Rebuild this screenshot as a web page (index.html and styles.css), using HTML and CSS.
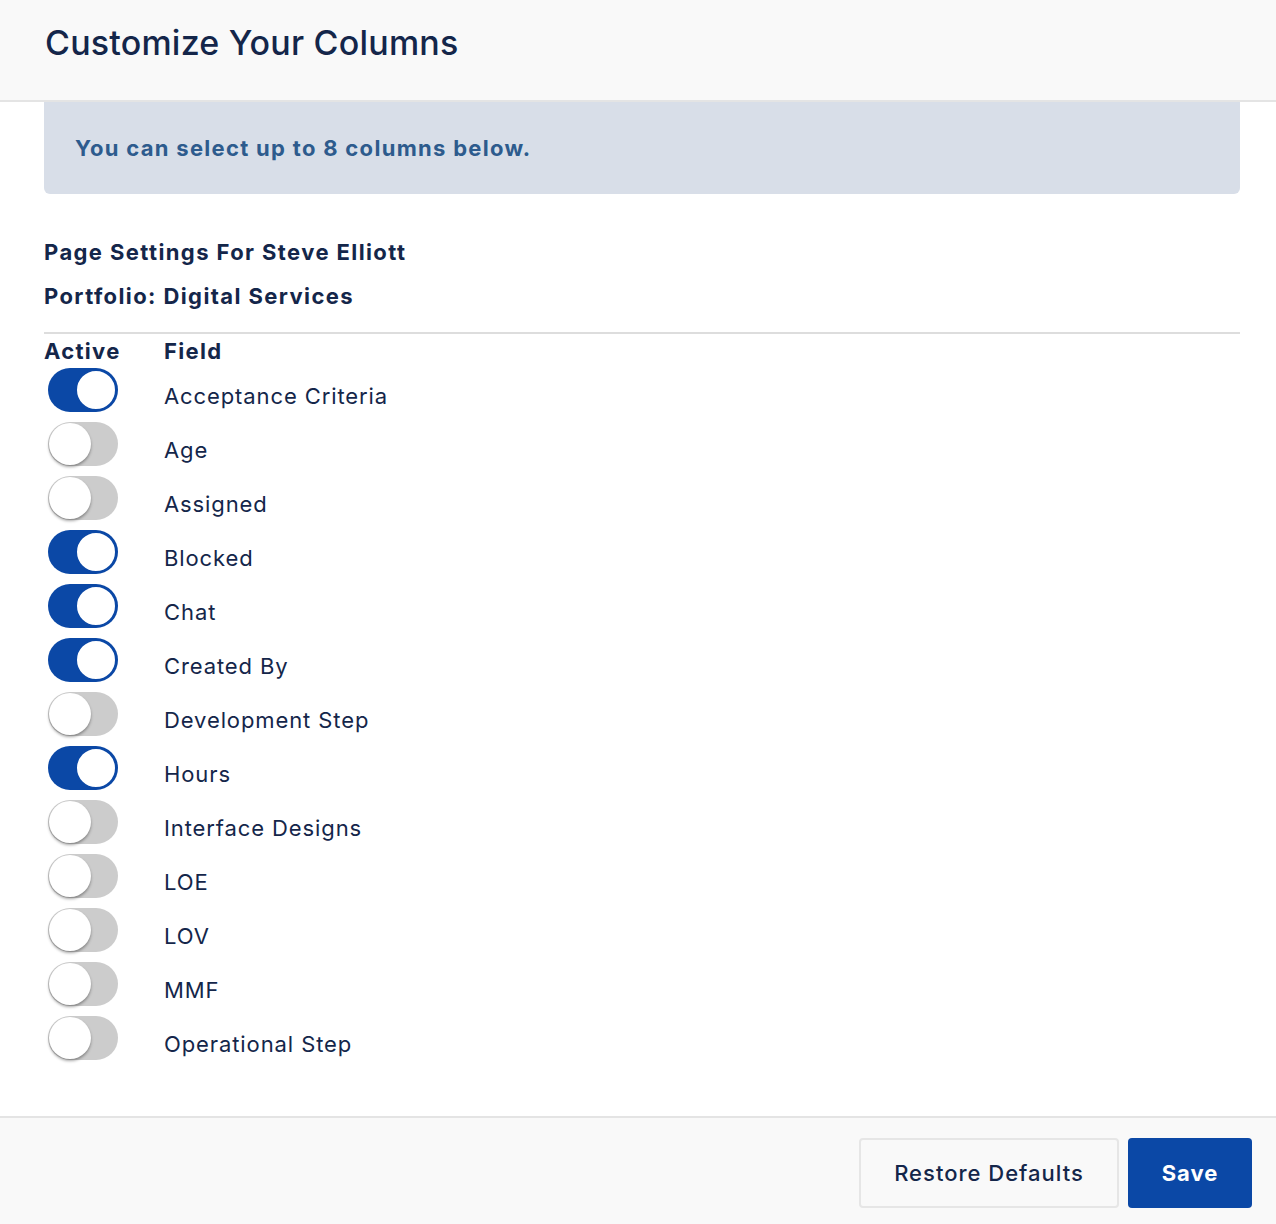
FILE: index.html
```html
<!DOCTYPE html>
<html lang="en">
<head>
    <meta charset="UTF-8">
    <title>Customize Your Columns</title>
    <link rel="stylesheet" href="styles.css">
</head>
<body>
    <div class="modal">
        <div class="modal-header">
            <h1>Customize Your Columns</h1>
        </div>
        <div class="modal-body">
            <div class="notice">You can select up to 8 columns below.</div>
            <p class="meta">Page Settings For Steve Elliott</p>
            <p class="meta">Portfolio: Digital Services</p>
            <div class="fields">
                <div class="field-row head">
                    <span class="col-active">Active</span>
                    <span class="col-field">Field</span>
                </div>
                <label class="field-row"><span class="col-active"><input type="checkbox" class="switch" checked></span><span class="col-field">Acceptance Criteria</span></label>
                <label class="field-row"><span class="col-active"><input type="checkbox" class="switch"></span><span class="col-field">Age</span></label>
                <label class="field-row"><span class="col-active"><input type="checkbox" class="switch"></span><span class="col-field">Assigned</span></label>
                <label class="field-row"><span class="col-active"><input type="checkbox" class="switch" checked></span><span class="col-field">Blocked</span></label>
                <label class="field-row"><span class="col-active"><input type="checkbox" class="switch" checked></span><span class="col-field">Chat</span></label>
                <label class="field-row"><span class="col-active"><input type="checkbox" class="switch" checked></span><span class="col-field">Created By</span></label>
                <label class="field-row"><span class="col-active"><input type="checkbox" class="switch"></span><span class="col-field">Development Step</span></label>
                <label class="field-row"><span class="col-active"><input type="checkbox" class="switch" checked></span><span class="col-field">Hours</span></label>
                <label class="field-row"><span class="col-active"><input type="checkbox" class="switch"></span><span class="col-field">Interface Designs</span></label>
                <label class="field-row"><span class="col-active"><input type="checkbox" class="switch"></span><span class="col-field">LOE</span></label>
                <label class="field-row"><span class="col-active"><input type="checkbox" class="switch"></span><span class="col-field">LOV</span></label>
                <label class="field-row"><span class="col-active"><input type="checkbox" class="switch"></span><span class="col-field">MMF</span></label>
                <label class="field-row"><span class="col-active"><input type="checkbox" class="switch"></span><span class="col-field">Operational Step</span></label>
            </div>
        </div>
        <div class="modal-footer">
            <button class="btn btn-default">Restore Defaults</button>
            <button class="btn btn-primary">Save</button>
        </div>
    </div>
</body>
</html>
```

FILE: styles.css
```css
body {
    margin: 0;
    font-family: Inter, "Noto Sans", sans-serif;
    color: #14264a;
    background: #fff;
    letter-spacing: 0.9px;
}
.modal {
    display: flex;
    flex-direction: column;
    min-height: 1224px;
}
.modal-header {
    height: 102px;
    background: #f9f9f9;
    border-bottom: 2px solid #e4e4e4;
    box-sizing: border-box;
    display: flex;
    align-items: center;
    padding: 0 45px 16px;
}
.modal-header h1 {
    margin: 0;
    font-size: 34px;
    font-weight: 500;
    letter-spacing: 0.2px;
}
.modal-body {
    flex: 1;
    padding: 0 36px 0 44px;
}
.notice {
    background: #d8dee8;
    border-radius: 0 0 6px 6px;
    height: 92px;
    display: flex;
    align-items: center;
    padding: 0 31px;
    font-size: 22px;
    font-weight: 700;
    letter-spacing: 1.3px;
    color: #2d5b8d;
}
.meta {
    margin: 0;
    font-size: 22px;
    font-weight: 700;
    letter-spacing: 1.4px;
    line-height: 44px;
}
.meta:first-of-type {
    margin-top: 36px;
}
.fields {
    margin-top: 14px;
    border-top: 2px solid #dddddd;
    padding-top: 4px;
}
.field-row {
    display: flex;
    align-items: center;
    height: 54px;
    font-size: 22px;
}
.field-row.head {
    height: 25px;
    font-weight: 700;
    letter-spacing: 1.3px;
}
.field-row .col-field {
    padding-top: 11px;
}
.field-row.head .col-field {
    padding-top: 0;
}
.col-active {
    width: 120px;
    display: flex;
    align-items: center;
}
.switch {
    appearance: none;
    -webkit-appearance: none;
    margin: 0 0 0 4px;
    width: 70px;
    height: 44px;
    border-radius: 22px;
    background: #cccccc;
    position: relative;
    cursor: pointer;
}
.switch::after {
    content: "";
    position: absolute;
    left: 1px;
    top: 1px;
    width: 42px;
    height: 42px;
    border-radius: 50%;
    background: #fff;
    box-sizing: border-box;
    box-shadow: 0 2px 3px rgba(0, 0, 0, 0.35);
}
.switch:checked {
    background: #0b48a6;
}
.switch:checked::after {
    left: 27px;
    border: 2px solid #0b48a6;
    box-shadow: none;
}
.modal-footer {
    border-top: 2px solid #e4e4e4;
    background: #f9f9f9;
    height: 108px;
    box-sizing: border-box;
    display: flex;
    justify-content: flex-end;
    align-items: flex-start;
    gap: 9px;
    padding: 20px 24px 0 0;
}
.btn {
    height: 70px;
    font-family: inherit;
    font-size: 22px;
    letter-spacing: 1px;
    border-radius: 4px;
    cursor: pointer;
}
.btn-default {
    width: 260px;
    background: #f9f9f9;
    border: 2px solid #e6e6e6;
    color: #14264a;
    font-weight: 500;
}
.btn-primary {
    width: 124px;
    background: #0b48a6;
    border: none;
    color: #fff;
    font-weight: 700;
}
```
